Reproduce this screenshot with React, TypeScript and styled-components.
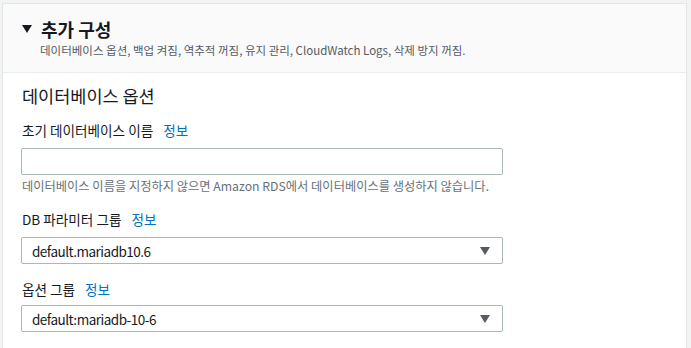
import React from "react";
import styled, { createGlobalStyle } from "styled-components";

const Global = createGlobalStyle`
  html, body { margin: 0; padding: 0; background: #f2f3f3; }
  body { font-family: "Noto Sans CJK KR", "Noto Sans", sans-serif; color: #16191f; }
`;

const Page = styled.div`
  padding: 3px 4px 0 2px;
  height: 345px;
  overflow: hidden;
`;

const Card = styled.section`
  background: #ffffff;
  border: 1px solid #e3e6e6;
  border-bottom: none;
  height: 360px;
`;

const Header = styled.div`
  background: #fafafa;
  border-bottom: 1px solid #eaeded;
  height: 69px;
  box-sizing: border-box;
  padding: 13px 0 0 19px;
`;

const TitleRow = styled.div`
  display: flex;
  align-items: center;
  gap: 9px;
  height: 24px;
`;

const Caret = styled.svg`
  width: 10px;
  height: 8px;
  fill: #16191f;
`;

const Title = styled.h2`
  margin: 0;
  font-size: 18px;
  font-weight: 700;
  line-height: 24px;
`;

const Description = styled.p`
  margin: 1px 0 0 18px;
  font-size: 11.5px;
  line-height: 16px;
  color: #545b64;
`;

const Body = styled.div`
  padding: 11px 0 0 18px;
  display: flex;
  flex-direction: column;
`;

const SectionTitle = styled.h3`
  margin: 0 0 12px 1px;
  font-size: 17.5px;
  font-weight: 400;
  line-height: 24px;
`;

const Field = styled.div<{ $gap: number }>`
  display: flex;
  flex-direction: column;
  margin-bottom: ${(p) => p.$gap}px;
`;

const Label = styled.label<{ $gap?: number }>`
  margin: 0 0 ${(p) => p.$gap ?? 8}px 1px;
  font-size: 13.6px;
  line-height: 20px;
  display: flex;
  gap: 10px;
`;

const Info = styled.a`
  color: #0073bb;
  text-decoration: none;
`;

const Input = styled.input`
  width: 482px;
  height: 27px;
  box-sizing: border-box;
  border: 1px solid #aab7b8;
  border-radius: 2px;
  background: #fff;
  margin: 0;
`;

const Hint = styled.div`
  margin: 3px 0 0 1px;
  font-size: 12.25px;
  line-height: 16px;
  color: #687078;
`;

const Select = styled.div`
  width: 482px;
  height: 27px;
  box-sizing: border-box;
  border: 1px solid #aab7b8;
  border-radius: 2px;
  display: flex;
  align-items: center;
  justify-content: space-between;
  padding: 0 12px 0 10px;
  font-size: 13.5px;
  letter-spacing: -0.5px;
  color: #16191f;
`;

const Arrow = styled.svg`
  width: 10px;
  height: 8px;
  fill: #545b64;
`;

const Tri = ({ as: C }: { as: typeof Caret }) => (
  <C viewBox="0 0 10 8">
    <path d="M0 0 H10 L5 8 Z" />
  </C>
);

export default function App() {
  return (
    <>
      <Global />
      <Page>
        <Card>
          <Header>
            <TitleRow>
              <Tri as={Caret} />
              <Title>추가 구성</Title>
            </TitleRow>
            <Description>
              데이터베이스 옵션, 백업 켜짐, 역추적 꺼짐, 유지 관리, CloudWatch Logs, 삭제 방지 꺼짐.
            </Description>
          </Header>
          <Body>
            <SectionTitle>데이터베이스 옵션</SectionTitle>
            <Field $gap={15}>
              <Label>
                초기 데이터베이스 이름 <Info href="#">정보</Info>
              </Label>
              <Input />
              <Hint>데이터베이스 이름을 지정하지 않으면 Amazon RDS에서 데이터베이스를 생성하지 않습니다.</Hint>
            </Field>
            <Field $gap={15}>
              <Label>
                DB 파라미터 그룹 <Info href="#">정보</Info>
              </Label>
              <Select>
                default.mariadb10.6
                <Tri as={Arrow} />
              </Select>
            </Field>
            <Field $gap={16}>
              <Label $gap={6}>
                옵션 그룹 <Info href="#">정보</Info>
              </Label>
              <Select>
                default:mariadb-10-6
                <Tri as={Arrow} />
              </Select>
            </Field>
          </Body>
        </Card>
      </Page>
    </>
  );
}
